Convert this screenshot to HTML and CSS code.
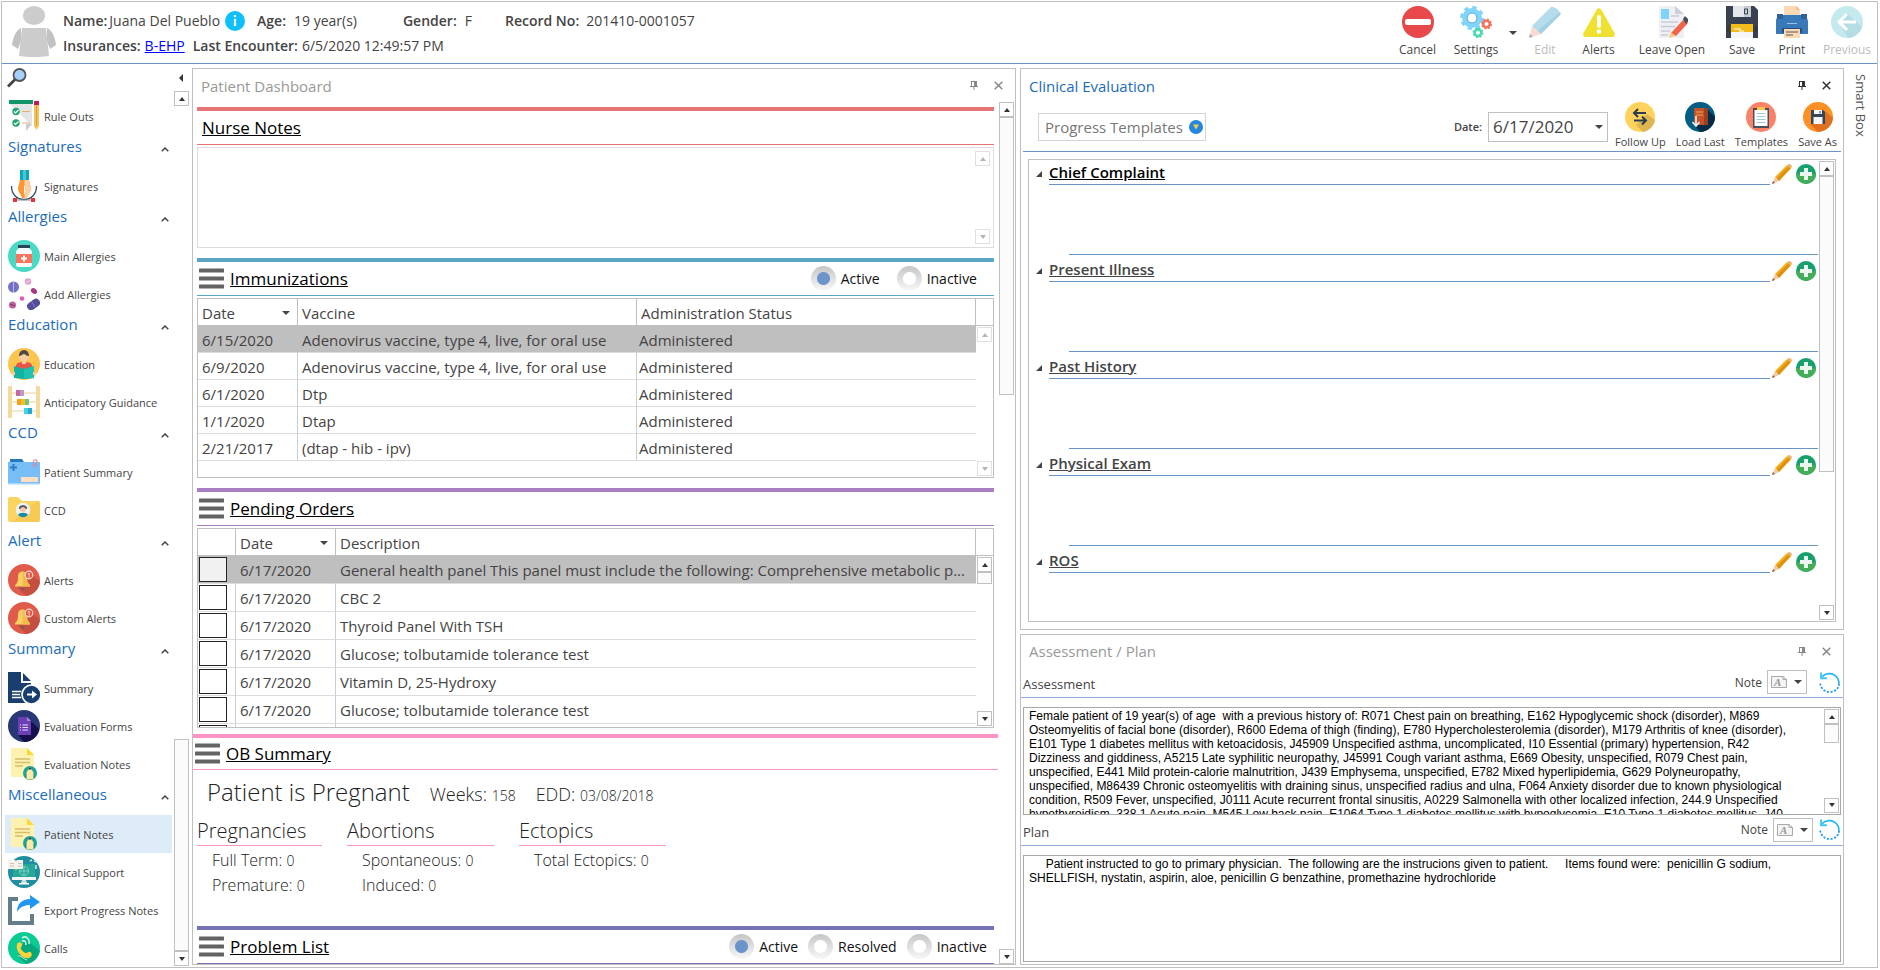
FILE: index.html
```html
<!DOCTYPE html>
<html lang="en">
<head>
    <meta charset="UTF-8">
    <meta name="viewport" content="width=device-width, initial-scale=1.0">
    <title>Patient Notes</title>
    <link rel="stylesheet" href="styles.css">
</head>
<body>
    <!-- Shared icons -->
    <svg class="sprite" aria-hidden="true">
        <symbol id="i-menu" viewBox="0 0 25 21">
            <path d="M1 2.500h23M1 10.500h23M1 18.500h23" stroke="#636363" stroke-width="4" stroke-linecap="round"/>
        </symbol>
        <symbol id="i-pin" viewBox="0 0 8 9">
            <path d="M1.500 0v5.500M1 .5h5M0 5.500h8M4 5.500V9" fill="none" stroke="currentColor"/>
            <path d="M4 0h3v6H4z" fill="currentColor"/>
        </symbol>
        <symbol id="i-close" viewBox="0 0 9 9">
            <path d="M.7.7l7.600 7.600M8.300.7L.7 8.300" stroke="currentColor" stroke-width="1.500"/>
        </symbol>
        <symbol id="i-chevron" viewBox="0 0 8 5">
            <path d="M.7 4.300L4 1l3.300 3.300" fill="none" stroke="#444" stroke-width="1.500"/>
        </symbol>
        <symbol id="i-pencil" viewBox="0 0 20 20">
            <path d="M3 13L15 1l4 3.500L7 17z" fill="#f3ae1b"/>
            <path d="M4.500 14.500L16.500 2.500l2 1.500L7 17z" fill="#dc9210"/>
            <path d="M15 1l2-1c1.500 0 2.500 1 3 2.500l-1 2z" fill="#e8b36a"/>
            <path d="M3 13l4 4-7 3z" fill="#f0cba0"/>
            <path d="M0 20l1-3 2 2z" fill="#8a5a4a"/>
        </symbol>
        <symbol id="i-plus" viewBox="0 0 20 20">
            <circle cx="10" cy="10" r="10" fill="#17a06e"/>
            <path d="M0 10a10 10 0 0 0 20 0z" fill="#43ae57"/>
            <path d="M10 4v12M4 10h12" stroke="#eef5ee" stroke-width="4"/>
        </symbol>
        <symbol id="i-refresh" viewBox="0 0 20 20">
            <path d="M3 4.500C6 1 12 .5 15.500 3.500 18 5.500 19 8 19 11" fill="none" stroke="#25b5f5" stroke-width="1.600"/>
            <path d="M19 11c0 5-4 8-9 8S1 15 1 9.500" fill="none" stroke="#1e9af0" stroke-width="1.700" stroke-dasharray="2 1.500"/>
            <path d="M2 .5V6h5.500" fill="none" stroke="#38c6f4" stroke-width="1.800"/>
        </symbol>
        <symbol id="i-page" viewBox="0 0 16 12">
            <path d="M.5.5H12l3.500 3v8H.5z" fill="#f4f4f4" stroke="#a9a9a9"/>
            <path d="M12 .5v3h3.500" fill="none" stroke="#a9a9a9"/>
        </symbol>
        <symbol id="i-bell" viewBox="0 0 32 32">
            <circle cx="16" cy="16" r="16" fill="#e05b49"/>
            <path d="M21 8l11 10c-1 7-6 13-14 14l-8-8z" fill="#c44f41"/>
            <path d="M7 21c3-2 3-5 3-9 0-3 2-4.500 4.500-4.500S19 9 19 12c0 4 0 7 3 9v1.500H7z" fill="#fbd063"/>
            <path d="M14.500 7.500C17 7.500 19 9 19 12c0 4 0 7 3 9v1.500h-7.500z" fill="#f3bb4e"/>
            <path d="M12 24h5l-2.500 3z" fill="#7b5a55"/>
            <circle cx="21" cy="11" r="3.800" fill="#e05b49" stroke="#f7dcd8" stroke-width="1.200"/>
        </symbol>
        <symbol id="i-note" viewBox="0 0 32 32">
            <path d="M3 0h16l7 7v22H3z" fill="#fff1b0"/>
            <path d="M19 0l7 7h-7z" fill="#fdd835"/>
            <path d="M7 11h15M7 14.500h15M7 18h8" stroke="#d8bd6a" stroke-width="1.300"/>
            <circle cx="22" cy="25" r="7" fill="#1aa594"/>
            <path d="M17.500 30.300c2.500 2.300 6.500 2.300 9 0L26 25h-8z" fill="#15877d"/>
            <path d="M22 18.500l3.500 6v7h-7v-7z" fill="#ffe9a8"/>
            <path d="M22 18.500l1.700 3h-3.400z" fill="#2b3b4a"/>
        </symbol>
    </svg>

    <div class="app">
        <header class="header">
            <svg class="avatar" viewBox="0 0 44 51">
                <ellipse cx="22" cy="9.500" rx="11" ry="9.500" fill="#ccc"/>
                <path d="M10 22h24l3 28c-8 1.500-22 1.500-30 0z" fill="#ccc"/>
                <path d="M9 22c-5 2-8 9-9 17l6 4 3-8zM35 22c5 2 8 9 9 17l-6 4-3-8z" fill="#c2c2c2"/>
            </svg>
            <div class="patient">
                <div class="patient-row">
                    <b class="name">Name:</b><span class="patient-name">Juana Del Pueblo</span>
                    <svg class="info" viewBox="0 0 20 20"><circle cx="10" cy="10" r="10" fill="#0dc0fb"/><path d="M10 8v7M10 4v2.300" stroke="#fff" stroke-width="2.200"/></svg>
                    <b class="age">Age:</b><span>19 year(s)</span>
                    <b class="gender">Gender:</b><span>F</span>
                    <b class="record">Record No:</b><span>201410-0001057</span>
                </div>
                <div class="patient-row">
                    <b>Insurances:</b><a href="#" class="insurance">B-EHP</a>
                    <b>Last Encounter:</b><span>6/5/2020 12:49:57 PM</span>
                </div>
            </div>
            <nav class="toolbar">
                <button type="button" class="tool">
                    <svg viewBox="0 0 32 32"><circle cx="16" cy="16" r="16" fill="#e84849"/><rect x="3" y="13" width="26" height="6" rx="2" fill="#fff"/></svg>
                    Cancel
                </button>
                <button type="button" class="tool tool-wide">
                    <svg viewBox="0 0 32 32">
                        <circle cx="12" cy="12" r="10" fill="none" stroke="#7fd3f9" stroke-width="4" stroke-dasharray="4 3.850"/>
                        <circle cx="12" cy="12" r="7.500" fill="none" stroke="#82d5fb" stroke-width="5"/>
                        <circle cx="12" cy="12" r="5" fill="none" stroke="#5aa8d8" stroke-width="1"/>
                        <circle cx="26.500" cy="18" r="3.300" fill="none" stroke="#f4735c" stroke-width="2.600"/>
                        <circle cx="26.500" cy="18" r="4.700" fill="none" stroke="#f4735c" stroke-width="1.600" stroke-dasharray="1.900 1.790"/>
                        <circle cx="18" cy="26.700" r="3.300" fill="none" stroke="#4ad9b4" stroke-width="2.600"/>
                        <circle cx="18" cy="26.700" r="4.700" fill="none" stroke="#4ad9b4" stroke-width="1.600" stroke-dasharray="1.900 1.790"/>
                    </svg>
                    Settings
                </button>
                <button type="button" class="tool-more" aria-label="More settings"><i class="caret"></i></button>
                <button type="button" class="tool tool-narrow" disabled>
                    <svg viewBox="0 0 32 32">
                        <path d="M3 20L22 1c2-2 11 5 9 8L12 28z" fill="#b5dcec"/>
                        <path d="M8 25L31 6c1 1 1 2 0 3L12 28z" fill="#a5d0e2"/>
                        <path d="M3 20l9 8-12 4z" fill="#f8dcd2"/>
                        <path d="M1 28l3 2.500L0 32z" fill="#9fb2bb"/>
                    </svg>
                    Edit
                </button>
                <button type="button" class="tool">
                    <svg viewBox="0 0 32 32">
                        <path d="M13.500 4c1.200-2.300 3.800-2.300 5 0l13 23c1 2-.3 4-2.500 4H3c-2.200 0-3.500-2-2.500-4z" fill="#f0e130"/>
                        <path d="M16 11v9" stroke="#fff" stroke-width="4" stroke-linecap="round"/><circle cx="16" cy="25.500" r="2.300" fill="#fff"/>
                    </svg>
                    Alerts
                </button>
                <button type="button" class="tool tool-long">
                    <svg viewBox="0 0 32 32">
                        <path d="M3 0h16l9 8v24H3z" fill="#eef0f4"/><path d="M19 0l9 8h-9z" fill="#c9cfdb"/>
                        <path d="M5 3h8v10H5z" fill="#7cd3fb"/>
                        <path d="M15 10h8M5 16h17M5 20.500h14M5 25h9M5 29h7" stroke="#c6ccd7" stroke-width="1.300"/>
                        <path d="M15 27L28 13l4 4-12 13z" fill="#f0654a"/><path d="M27 13l2-3 4 4-3 4z" fill="#46505f"/>
                        <path d="M15 26l4 4-6 2z" fill="#f5c77b"/>
                    </svg>
                    Leave Open
                </button>
                <button type="button" class="tool tool-narrow">
                    <svg viewBox="0 0 32 32">
                        <path d="M0 0h28l4 4v28H0z" fill="#394052"/><path d="M7 0h18v11H7z" fill="#c9cdd3"/><path d="M7 0h11v11H7z" fill="#e4e6ea"/>
                        <path d="M18.500 3h3v5h-3z" fill="#c9cdd3" stroke="#394052"/>
                        <path d="M5 18h22v8H5z" fill="#f2bd1c"/><path d="M5 26h22v6H5z" fill="#f5f5f5"/><path d="M8 23h7M13 25h5" stroke="#fff"/>
                        <path d="M2 20v6M30 20v6" stroke="#262c3a"/>
                    </svg>
                    Save
                </button>
                <button type="button" class="tool tool-narrow">
                    <svg viewBox="0 0 32 32">
                        <path d="M8 0h13l3 4v10H8z" fill="#fbd9b5"/><path d="M20 0l4 4h-4z" fill="#eebc8d"/>
                        <path d="M2 9h28l2 6v13H0V14z" fill="#3a79b7"/><path d="M1 8h6v5H1zM25 8h6v5h-6z" fill="#2f6299"/>
                        <path d="M11 17.500h10" stroke="#8ec7f0"/>
                        <path d="M6 22h20v5H6z" fill="#25507f"/><path d="M8 23h16v9H8z" fill="#fbd9b5"/><path d="M10 26h12M10 29h7" stroke="#5d5a58"/>
                    </svg>
                    Print
                </button>
                <button type="button" class="tool tool-wide" disabled>
                    <svg viewBox="0 0 32 32">
                        <circle cx="16" cy="16" r="16" fill="#c5eaee"/><path d="M16 7l15 14c-2 6-7 11-14 11L8 17z" fill="#b5dde3"/>
                        <path d="M25 16H9M16 8l-8 8 8 8" fill="none" stroke="#fff" stroke-width="3"/>
                    </svg>
                    Previous
                </button>
            </nav>
        </header>

        <div class="main">
            <aside class="sidebar">
                <div class="sidebar-top">
                    <svg viewBox="0 0 20 20"><circle cx="12.500" cy="7" r="6" fill="#a4d0fb" stroke="#555" stroke-width="1.800"/><path d="M8 11.500L1 18.500" stroke="#444" stroke-width="2.800"/></svg>
                    <i class="collapse"></i>
                </div>
                <div class="sidebar-body">
                    <div class="sidebar-list">
                        <a href="#" class="item">
                            <svg viewBox="0 0 32 32">
                                <path d="M2 1h22v30l-7-6H2z" fill="#fff"/><path d="M2 4h22v22z" fill="#e2e4e6"/><path d="M18 24h6l-6 7z" fill="#c9ccd0"/>
                                <path d="M1 0h24v4H1z" fill="#12946a"/>
                                <circle cx="8" cy="11.500" r="3.700" fill="#22a56e"/><circle cx="8" cy="23" r="3.700" fill="#22a56e"/>
                                <path d="M6 11.500l1.500 1.500 3-3M6 23l1.500 1.500 3-3" fill="none" stroke="#fff" stroke-width="1.200"/>
                                <path d="M14 11.500h8M14 23h8" stroke="#e3b268"/>
                                <path d="M26 4h5v22l-2.500 4-2.500-4z" fill="#f3c35a"/><path d="M28.500 4v22" stroke="#d9a13c"/><path d="M26 1h5v4h-5z" fill="#c2185b"/>
                            </svg>
                            Rule Outs
                        </a>
                        <h3 class="group">Signatures <svg><use href="#i-chevron"/></svg></h3>
                        <a href="#" class="item">
                            <svg viewBox="0 0 32 32">
                                <path d="M12 0h9v10h-9z" fill="#0fa7b8"/><path d="M15 0h3v10h-3z" fill="#47c8da"/>
                                <path d="M12 10h9l2 8c0 4-3 6-4 10h-5c-1-4-4-6-4-10z" fill="#ff9633"/><path d="M16.500 10H21l2 8c0 4-3 6-4 10h-2.500z" fill="#fcd0a4"/>
                                <path d="M16.500 16v8" stroke="#fff"/>
                                <path d="M3.500 16c0 8 5 13.500 12.500 13.500S28.500 24 28.500 16" fill="none" stroke="#35525e" stroke-width="1.300"/><path d="M7 30h18" stroke="#8796a0"/>
                                <path d="M5 28h4v4H5zM23 28h4v4h-4z" fill="#e8323c"/>
                            </svg>
                            Signatures
                        </a>
                        <h3 class="group">Allergies <svg><use href="#i-chevron"/></svg></h3>
                        <a href="#" class="item">
                            <svg viewBox="0 0 32 32">
                                <circle cx="16" cy="16" r="16" fill="#4ad9c4"/><path d="M11 8h10l3 3v14c0 1-1 2-2 2H10c-1 0-2-1-2-2V11z" fill="#f7fafa"/>
                                <path d="M10 5h12v3H10z" fill="#2c4257"/><path d="M8 14h16v9H8z" fill="#fb7358"/><path d="M16 15.500v6M13 18.500h6" stroke="#fff" stroke-width="2"/>
                            </svg>
                            Main Allergies
                        </a>
                        <a href="#" class="item">
                            <svg viewBox="0 0 32 32">
                                <circle cx="5.500" cy="9" r="5.500" fill="#7571c9"/><path d="M5.500 4v10" stroke="#bdb9ee"/>
                                <circle cx="20" cy="3.500" r="3.300" fill="#dfa0cb"/><path d="M18 5l4-3" stroke="#f6dcee"/>
                                <ellipse cx="26" cy="13" rx="3.300" ry="2.500" transform="rotate(35 26 13)" fill="#a83a84"/>
                                <circle cx="14" cy="20.500" r="2.300" fill="#ea55bc"/><circle cx="4.500" cy="27" r="3.500" fill="#c0609f"/><path d="M2 26l5 2" stroke="#7e2c67"/>
                                <rect x="18.500" y="22.500" width="14" height="8" rx="4" transform="rotate(-35 25.500 26.500)" fill="#544e9d"/><path d="M23 23l4 6" stroke="#8580cc"/>
                            </svg>
                            Add Allergies
                        </a>
                        <h3 class="group">Education <svg><use href="#i-chevron"/></svg></h3>
                        <a href="#" class="item">
                            <svg viewBox="0 0 32 32">
                                <circle cx="16" cy="16" r="16" fill="#fdc54e"/><path d="M8 17c2-3 4-3 8-3s6 0 8 3v5H8z" fill="#e8564b"/>
                                <circle cx="16" cy="8.500" r="5" fill="#f7cda4"/><path d="M11 8c0-8 10-8 10 0-3 0-4-2-5-2s-3 2-5 2z" fill="#4f4a48"/><path d="M14 13h4v3h-4z" fill="#f7cda4"/>
                                <path d="M6 18l10 3 10-3v12l-10 1-10-1z" fill="#12b3a3"/><path d="M16 21l10-3v12l-10 1z" fill="#22c2b0"/><path d="M4 24h3v3H4zM25 24h3v3h-3z" fill="#f7cda4"/>
                            </svg>
                            Education
                        </a>
                        <a href="#" class="item">
                            <svg viewBox="0 0 32 32">
                                <path d="M4 7h24M4 16h24M4 25h24" stroke="#e6cf98"/>
                                <path d="M2 1.500v29M30 1.500v29" stroke="#f3d99b" stroke-width="4" stroke-linecap="round"/>
                                <path d="M8 4h4v6H8z" fill="#c9659f"/><path d="M12 4h4v6h-4z" fill="#b79ccb"/>
                                <path d="M9 13h4v6H9z" fill="#f5a11d"/><path d="M13 13h4v6h-4z" fill="#f6c218"/><path d="M17 13h4v6h-4z" fill="#73c08b"/>
                                <path d="M16 22h4v6h-4z" fill="#44d1ee"/><path d="M20 22h4v6h-4z" fill="#2aa9cf"/>
                            </svg>
                            Anticipatory Guidance
                        </a>
                        <h3 class="group">CCD <svg><use href="#i-chevron"/></svg></h3>
                        <a href="#" class="item">
                            <svg viewBox="0 0 32 32">
                                <path d="M2 3h12l2 3H2z" fill="#2678bd"/><path d="M0 6h32v22H0z" fill="#77bdf6"/><path d="M0 27h32v1.500H0z" fill="#a7d6fb"/>
                                <path d="M5.500 8v7M2 11.500h7" stroke="#2b7fc4" stroke-width="2"/><path d="M13 21h17v5H13z" fill="#fcdfc2"/>
                                <path d="M25 8l1-4h3l-1 6-2 1z" fill="none" stroke="#e57f8b"/>
                            </svg>
                            Patient Summary
                        </a>
                        <a href="#" class="item">
                            <svg viewBox="0 0 32 32">
                                <path d="M0 5c0-1 1-2 2-2h8l4 4h16c1 0 2 1 2 2v17c0 1-1 2-2 2H2c-1 0-2-1-2-2z" fill="#fbd35f"/><path d="M30 7c1 0 2 1 2 2v17c0 1-1 2-2 2H4z" fill="#f4c04c" opacity=".5"/>
                                <circle cx="15" cy="16" r="7.300" fill="#edf1f3"/><circle cx="15" cy="15" r="3" fill="#f5c9a2"/>
                                <path d="M11 15c-1-5 9-5 8 0-2 0-2-2-4-2s-2 2-4 2z" fill="#49545d"/><path d="M10 21c1-3 9-3 10 0-3 3-7 3-10 0z" fill="#1b8ba0"/>
                            </svg>
                            CCD
                        </a>
                        <h3 class="group">Alert <svg><use href="#i-chevron"/></svg></h3>
                        <a href="#" class="item"><svg viewBox="0 0 32 32"><use href="#i-bell"/><text x="19" y="14" font-size="7" fill="#fff">1</text></svg>Alerts</a>
                        <a href="#" class="item"><svg viewBox="0 0 32 32"><use href="#i-bell"/><text x="19" y="14" font-size="7" fill="#fff">1</text></svg>Custom Alerts</a>
                        <h3 class="group">Summary <svg><use href="#i-chevron"/></svg></h3>
                        <a href="#" class="item">
                            <svg viewBox="0 0 32 32">
                                <path d="M0 0h13v11h10v20H0z" fill="#183f6d"/><path d="M15 1l8 8h-8z" fill="#183f6d"/>
                                <path d="M4 19.500h9M4 22.500h8M4 25.500h9" stroke="#fff" stroke-width="1.300"/>
                                <circle cx="23.500" cy="22.500" r="9.500" fill="#183f6d" stroke="#fff" stroke-width="1.700"/><path d="M19 22.500h6" stroke="#fff" stroke-width="2"/><path d="M24 18.500l5 4-5 4z" fill="#fff"/>
                            </svg>
                            Summary
                        </a>
                        <a href="#" class="item">
                            <svg viewBox="0 0 32 32">
                                <circle cx="16" cy="16" r="16" fill="#283876"/><path d="M22 10l9 9c-1 7-7 13-15 13l-6-7z" fill="#150f4c"/>
                                <path d="M10 7h9l4 4v14H10z" fill="#6b3fb5"/><path d="M19 7l4 4h-4z" fill="#a887dc"/>
                                <path d="M12 15h1M14.500 15H20M12 17.500h1M14.500 17.500H20M12 20h1M14.500 20H20" stroke="#e7dcf8" stroke-width="1.200"/>
                            </svg>
                            Evaluation Forms
                        </a>
                        <a href="#" class="item"><svg><use href="#i-note"/></svg>Evaluation Notes</a>
                        <h3 class="group">Miscellaneous <svg><use href="#i-chevron"/></svg></h3>
                        <a href="#" class="item selected"><svg><use href="#i-note"/></svg>Patient Notes</a>
                        <a href="#" class="item">
                            <svg viewBox="0 0 32 32">
                                <circle cx="16" cy="16" r="16" fill="#1f8fa0"/><path d="M5 8h22v14H5z" fill="#27a796"/><path d="M4 21h24v3H4z" fill="#f2f5f7"/>
                                <path d="M14 24h4l1 3h-6z" fill="#d4dbe0"/><path d="M11 27h10v1.500H11z" fill="#fff"/>
                                <circle cx="16" cy="15" r="4.500" fill="none" stroke="#7ed0c6"/><path d="M11.500 15h9M16 10.500v9" stroke="#7ed0c6"/>
                                <path d="M0 4h7l1 1 1-1h6v9H9l-1 1-1-1H0z" fill="#f7f3ea"/><path d="M2 7.500h4M2 10h4M10 7.500h4M10 10h4" stroke="#c9c4b8"/>
                                <path d="M22 5l2-1M26 5l3 1M28 9v4" stroke="#d9eef2" stroke-width="1.500"/>
                            </svg>
                            Clinical Support
                        </a>
                        <a href="#" class="item">
                            <svg viewBox="0 0 32 32">
                                <path d="M10 5H2v24h22v-9" fill="none" stroke="#647d8a" stroke-width="4"/>
                                <path d="M22 1l10 7-10 7v-4c-6 0-10 2-13 7 0-8 5-13 13-13z" fill="#2196f3"/>
                            </svg>
                            Export Progress Notes
                        </a>
                        <a href="#" class="item">
                            <svg viewBox="0 0 32 32">
                                <circle cx="16" cy="16" r="16" fill="#0acb93"/><path d="M17 7l15 12c-2 8-7 12-14 13l-8-8z" fill="#07a87c"/>
                                <path d="M9 12c2-3 5-2 5 1 0 2-2 2-1 4s4 4 5 4c2 0 2-2 4-1 3 1 2 5-1 6-6 2-14-7-12-14z" fill="#fdd23a"/>
                                <path d="M14 6c4-3 8 1 7 6M14 9c3-1 4 1 4 4" fill="none" stroke="#d6f5e8" stroke-width="1.500"/>
                                <path d="M10 24c3-1 5 3 9 4" fill="none" stroke="#d6f5e8"/>
                            </svg>
                            Calls
                        </a>
                    </div>
                    <div class="scroll">
                        <button type="button" class="scroll-btn" aria-label="Scroll up"><i class="up"></i></button>
                        <div class="track"></div>
                        <div class="thumb thumb-sidebar"></div>
                        <button type="button" class="scroll-btn" aria-label="Scroll down"><i class="down"></i></button>
                    </div>
                </div>
            </aside>

            <section class="panel dashboard">
                <div class="panel-title">
                    <h2>Patient Dashboard</h2>
                    <button type="button" aria-label="Pin"><svg class="pin"><use href="#i-pin"/></svg></button>
                    <button type="button" aria-label="Close"><svg class="close"><use href="#i-close"/></svg></button>
                </div>
                <div class="dashboard-body">
                    <div class="dashboard-content">
                        <div class="section nurse">
                            <div class="section-head"><a href="#">Nurse Notes</a></div>
                            <div class="nurse-box">
                                <div class="scroll off">
                                    <button type="button" class="scroll-btn" aria-label="Scroll up"><i class="up"></i></button>
                                    <div class="track"></div>
                                    <button type="button" class="scroll-btn" aria-label="Scroll down"><i class="down"></i></button>
                                </div>
                            </div>
                        </div>

                        <div class="section immunizations">
                            <div class="section-head">
                                <svg class="menu"><use href="#i-menu"/></svg>
                                <a href="#">Immunizations</a>
                                <div class="radios">
                                    <label><input type="radio" name="imm" checked>Active</label>
                                    <label><input type="radio" name="imm">Inactive</label>
                                </div>
                            </div>
                            <div class="grid-box imm-box">
                                <table>
                                    <colgroup><col class="col-date"><col class="col-half"><col class="col-half"></colgroup>
                                    <thead>
                                        <tr><th>Date<i class="caret"></i></th><th>Vaccine</th><th>Administration Status</th></tr>
                                    </thead>
                                    <tbody>
                                        <tr class="current"><td>6/15/2020</td><td>Adenovirus vaccine, type 4, live, for oral use</td><td>Administered</td></tr>
                                        <tr><td>6/9/2020</td><td>Adenovirus vaccine, type 4, live, for oral use</td><td>Administered</td></tr>
                                        <tr><td>6/1/2020</td><td>Dtp</td><td>Administered</td></tr>
                                        <tr><td>1/1/2020</td><td>Dtap</td><td>Administered</td></tr>
                                        <tr><td>2/21/2017</td><td>(dtap - hib - ipv)</td><td>Administered</td></tr>
                                    </tbody>
                                </table>
                                <div class="grid-side">
                                    <div class="grid-corner"></div>
                                    <div class="scroll off">
                                        <button type="button" class="scroll-btn" aria-label="Scroll up"><i class="up"></i></button>
                                        <div class="track"></div>
                                        <button type="button" class="scroll-btn" aria-label="Scroll down"><i class="down"></i></button>
                                    </div>
                                </div>
                            </div>
                        </div>

                        <div class="section orders">
                            <div class="section-head">
                                <svg class="menu"><use href="#i-menu"/></svg>
                                <a href="#">Pending Orders</a>
                            </div>
                            <div class="grid-box orders-box">
                                <table>
                                    <colgroup><col class="col-check"><col class="col-date"><col></colgroup>
                                    <thead>
                                        <tr><th></th><th>Date<i class="caret"></i></th><th>Description</th></tr>
                                    </thead>
                                    <tbody>
                                        <tr class="current"><td><input type="checkbox" aria-label="Select order"></td><td>6/17/2020</td><td>General health panel This panel must include the following: Comprehensive metabolic p...</td></tr>
                                        <tr><td><input type="checkbox" aria-label="Select order"></td><td>6/17/2020</td><td>CBC 2</td></tr>
                                        <tr><td><input type="checkbox" aria-label="Select order"></td><td>6/17/2020</td><td>Thyroid Panel With TSH</td></tr>
                                        <tr><td><input type="checkbox" aria-label="Select order"></td><td>6/17/2020</td><td>Glucose; tolbutamide tolerance test</td></tr>
                                        <tr><td><input type="checkbox" aria-label="Select order"></td><td>6/17/2020</td><td>Vitamin D, 25-Hydroxy</td></tr>
                                        <tr><td><input type="checkbox" aria-label="Select order"></td><td>6/17/2020</td><td>Glucose; tolbutamide tolerance test</td></tr>
                                        <tr><td><input type="checkbox" aria-label="Select order"></td><td></td><td></td></tr>
                                    </tbody>
                                </table>
                                <div class="grid-side">
                                    <div class="grid-corner"></div>
                                    <div class="scroll">
                                        <button type="button" class="scroll-btn" aria-label="Scroll up"><i class="up"></i></button>
                                        <div class="thumb thumb-small"></div>
                                        <div class="track"></div>
                                        <button type="button" class="scroll-btn" aria-label="Scroll down"><i class="down"></i></button>
                                    </div>
                                </div>
                            </div>
                        </div>

                        <div class="section ob">
                            <div class="section-head">
                                <svg class="menu"><use href="#i-menu"/></svg>
                                <a href="#">OB Summary</a>
                            </div>
                            <div class="ob-status">
                                <span class="ob-main">Patient is Pregnant</span>
                                <span>Weeks: <small>158</small></span>
                                <span>EDD: <small>03/08/2018</small></span>
                            </div>
                            <div class="ob-columns">
                                <div class="ob-col">
                                    <h4>Pregnancies</h4>
                                    <p>Full Term: <small>0</small></p>
                                    <p>Premature: <small>0</small></p>
                                </div>
                                <div class="ob-col">
                                    <h4>Abortions</h4>
                                    <p>Spontaneous: <small>0</small></p>
                                    <p>Induced: <small>0</small></p>
                                </div>
                                <div class="ob-col">
                                    <h4>Ectopics</h4>
                                    <p>Total Ectopics: <small>0</small></p>
                                </div>
                            </div>
                        </div>

                        <div class="section problems">
                            <div class="section-head">
                                <svg class="menu"><use href="#i-menu"/></svg>
                                <a href="#">Problem List</a>
                                <div class="radios">
                                    <label><input type="radio" name="prob" checked>Active</label>
                                    <label><input type="radio" name="prob">Resolved</label>
                                    <label><input type="radio" name="prob">Inactive</label>
                                </div>
                            </div>
                        </div>
                    </div>
                    <div class="scroll">
                        <button type="button" class="scroll-btn" aria-label="Scroll up"><i class="up"></i></button>
                        <div class="thumb thumb-dashboard"></div>
                        <div class="track"></div>
                        <button type="button" class="scroll-btn" aria-label="Scroll down"><i class="down"></i></button>
                    </div>
                </div>
            </section>

            <div class="right">
                <section class="panel active clinical">
                    <div class="panel-title">
                        <h2>Clinical Evaluation</h2>
                        <button type="button" aria-label="Pin"><svg class="pin"><use href="#i-pin"/></svg></button>
                        <button type="button" aria-label="Close"><svg class="close"><use href="#i-close"/></svg></button>
                    </div>
                    <div class="clinical-bar">
                        <button type="button" class="templates">
                            Progress Templates
                            <svg viewBox="0 0 14 14"><circle cx="7" cy="7" r="7" fill="#2488dc"/><path d="M4 4.500h6L7 9.500z" fill="#fbc94b"/></svg>
                        </button>
                        <label class="date-label" for="date">Date:</label>
                        <div class="date-box">
                            <select id="date"><option>6/17/2020</option></select>
                            <i class="caret"></i>
                        </div>
                        <div class="round-tools">
                            <button type="button">
                                <svg viewBox="0 0 30 30">
                                    <circle cx="15" cy="15" r="15" fill="#ffd25e"/><path d="M22 12l8 6c-1 6-6 11-12 12l-7-7z" fill="#e0b54e"/>
                                    <path d="M21 11H9M13 7l-4 4 4 4M9 18.500h12M17 14.500l4 4-4 4" fill="none" stroke="#2b3b4e" stroke-width="2"/>
                                </svg>
                                Follow Up
                            </button>
                            <button type="button">
                                <svg viewBox="0 0 30 30">
                                    <circle cx="15" cy="15" r="15" fill="#045e84"/><path d="M22 7l8 8c0 8-7 15-15 15l-5-6z" fill="#032b45"/>
                                    <path d="M9 6h14v17H9z" fill="#c4532d"/><path d="M19 6h4v17h-4z" fill="#98401f"/><path d="M11 10h7M11 13h7" stroke="#f5a34c"/>
                                    <path d="M11 14v9M7.500 20l3.500 4 3.500-4" fill="none" stroke="#e6f4fb" stroke-width="1.600"/>
                                </svg>
                                Load Last
                            </button>
                            <button type="button">
                                <svg viewBox="0 0 30 30">
                                    <circle cx="15" cy="15" r="15" fill="#fb8167"/><path d="M7 6h16v20H7z" fill="#474e5c"/><path d="M8.500 8h13v16h-13z" fill="#fff"/>
                                    <path d="M11 5h8v3h-8z" fill="#fcc54c"/><path d="M10.500 11.500h9M10.500 14.500h9M10.500 17.500h9M10.500 20.500h9" stroke="#9ccbe6"/>
                                </svg>
                                Templates
                            </button>
                            <button type="button">
                                <svg viewBox="0 0 30 30">
                                    <circle cx="15" cy="15" r="15" fill="#fd9126"/><path d="M22 9l8 7c-1 8-7 13-15 14l-7-7z" fill="#e06f1f"/>
                                    <path d="M8 8h12l2 2v12H8z" fill="#34455a"/><path d="M11 8h8v4h-8zM10.500 15h9v7h-9z" fill="#f3f5f7"/><path d="M17 9v2.500" stroke="#34455a"/>
                                </svg>
                                Save As
                            </button>
                        </div>
                    </div>
                    <div class="eval-box">
                        <div class="eval-list">
                            <div class="eval current">
                                <div class="eval-head"><i class="expander"></i><div class="eval-line"><a href="#">Chief Complaint</a></div><button type="button" aria-label="Edit"><svg><use href="#i-pencil"/></svg></button><button type="button" aria-label="Add"><svg><use href="#i-plus"/></svg></button></div>
                                <div class="eval-body"></div>
                            </div>
                            <div class="eval">
                                <div class="eval-head"><i class="expander"></i><div class="eval-line"><a href="#">Present Illness</a></div><button type="button" aria-label="Edit"><svg><use href="#i-pencil"/></svg></button><button type="button" aria-label="Add"><svg><use href="#i-plus"/></svg></button></div>
                                <div class="eval-body"></div>
                            </div>
                            <div class="eval">
                                <div class="eval-head"><i class="expander"></i><div class="eval-line"><a href="#">Past History</a></div><button type="button" aria-label="Edit"><svg><use href="#i-pencil"/></svg></button><button type="button" aria-label="Add"><svg><use href="#i-plus"/></svg></button></div>
                                <div class="eval-body"></div>
                            </div>
                            <div class="eval">
                                <div class="eval-head"><i class="expander"></i><div class="eval-line"><a href="#">Physical Exam</a></div><button type="button" aria-label="Edit"><svg><use href="#i-pencil"/></svg></button><button type="button" aria-label="Add"><svg><use href="#i-plus"/></svg></button></div>
                                <div class="eval-body"></div>
                            </div>
                            <div class="eval">
                                <div class="eval-head"><i class="expander"></i><div class="eval-line"><a href="#">ROS</a></div><button type="button" aria-label="Edit"><svg><use href="#i-pencil"/></svg></button><button type="button" aria-label="Add"><svg><use href="#i-plus"/></svg></button></div>
                                <div class="eval-body"></div>
                            </div>
                        </div>
                        <div class="scroll">
                            <button type="button" class="scroll-btn" aria-label="Scroll up"><i class="up"></i></button>
                            <div class="thumb thumb-eval"></div>
                            <div class="track"></div>
                            <button type="button" class="scroll-btn" aria-label="Scroll down"><i class="down"></i></button>
                        </div>
                    </div>
                </section>

                <section class="panel plan">
                    <div class="panel-title">
                        <h2>Assessment / Plan</h2>
                        <button type="button" aria-label="Pin"><svg class="pin"><use href="#i-pin"/></svg></button>
                        <button type="button" aria-label="Close"><svg class="close"><use href="#i-close"/></svg></button>
                    </div>
                    <div class="plan-head">
                        <label for="assessment">Assessment</label>
                        <span class="note">Note</span>
                        <button type="button" class="note-btn" aria-label="Note template"><svg viewBox="0 0 16 12"><use href="#i-page"/><text class="note-letter" x="3" y="10">A</text></svg><i class="caret"></i></button>
                        <button type="button" class="refresh" aria-label="Refresh"><svg><use href="#i-refresh"/></svg></button>
                    </div>
                    <div class="plan-box">
                        <textarea id="assessment">Female patient of 19 year(s) of age  with a previous history of: R071 Chest pain on breathing, E162 Hypoglycemic shock (disorder), M869
Osteomyelitis of facial bone (disorder), R600 Edema of thigh (finding), E780 Hypercholesterolemia (disorder), M179 Arthritis of knee (disorder),
E101 Type 1 diabetes mellitus with ketoacidosis, J45909 Unspecified asthma, uncomplicated, I10 Essential (primary) hypertension, R42
Dizziness and giddiness, A5215 Late syphilitic neuropathy, J45991 Cough variant asthma, E669 Obesity, unspecified, R079 Chest pain,
unspecified, E441 Mild protein-calorie malnutrition, J439 Emphysema, unspecified, E782 Mixed hyperlipidemia, G629 Polyneuropathy,
unspecified, M86439 Chronic osteomyelitis with draining sinus, unspecified radius and ulna, F064 Anxiety disorder due to known physiological
condition, R509 Fever, unspecified, J0111 Acute recurrent frontal sinusitis, A0229 Salmonella with other localized infection, 244.9 Unspecified
hypothyroidism, 338.1 Acute pain, M545 Low back pain, E1064 Type 1 diabetes mellitus with hypoglycemia, E10 Type 1 diabetes mellitus, J40</textarea>
                        <div class="scroll">
                            <button type="button" class="scroll-btn" aria-label="Scroll up"><i class="up"></i></button>
                            <div class="thumb thumb-note"></div>
                            <div class="track"></div>
                            <button type="button" class="scroll-btn" aria-label="Scroll down"><i class="down"></i></button>
                        </div>
                    </div>
                    <div class="plan-head">
                        <label for="plan">Plan</label>
                        <span class="note">Note</span>
                        <button type="button" class="note-btn close-by" aria-label="Note template"><svg viewBox="0 0 16 12"><use href="#i-page"/><text class="note-letter" x="3" y="10">A</text></svg><i class="caret"></i></button>
                        <button type="button" class="refresh" aria-label="Refresh"><svg><use href="#i-refresh"/></svg></button>
                    </div>
                    <div class="plan-box">
                        <textarea id="plan">     Patient instructed to go to primary physician.  The following are the instrucions given to patient.     Items found were:  penicillin G sodium,
SHELLFISH, nystatin, aspirin, aloe, penicillin G benzathine, promethazine hydrochloride</textarea>
                    </div>
                </section>
            </div>

            <div class="smart-box"><a href="#">Smart Box</a></div>
        </div>
    </div>
</body>
</html>
```

FILE: styles.css
```css
* {
    box-sizing: border-box;
}

body {
    margin: 0;
    padding: 1px 2px 2px 1px;
    height: 100vh;
    font-family: "Open Sans", "Noto Sans", sans-serif;
    font-size: 15px;
    color: #444;
    background-color: #fff;
}

button {
    font-family: inherit;
    color: inherit;
    background: none;
    border: none;
    padding: 0;
    cursor: pointer;
}

h2, h3, h4, p {
    margin: 0;
    font-weight: 400;
}

svg {
    display: block;
    flex: none;
}

.sprite {
    position: absolute;
    width: 0;
    height: 0;
}

.app {
    display: flex;
    flex-direction: column;
    height: 100%;
    border: 1px solid #c0c0c0;
}

/* Header */
.header {
    display: flex;
    height: 62px;
    border-bottom: 1px solid #6a93c8;
    flex: none;
}

.avatar {
    width: 44px;
    height: 51px;
    margin: 4px 7px 0 10px;
}

.patient {
    flex: 1;
    padding-top: 6px;
    white-space: nowrap;
}

.patient-row {
    display: flex;
    align-items: center;
    height: 25px;
    font-size: 14px;
}

.patient-row b {
    font-weight: 600;
    margin-right: 4px;
}

.patient-row .name {
    margin-right: 2px;
}

.patient-row .patient-name {
    margin-right: 5px;
}

.patient-row .age {
    margin: 0 8px 0 12px;
}

.patient-row .gender {
    margin: 0 8px 0 46px;
}

.patient-row .record {
    margin: 0 7px 0 33px;
}

.patient-row .insurance {
    color: #00f;
    margin-right: 8px;
}

.info {
    width: 20px;
    height: 20px;
}

.toolbar {
    display: flex;
    align-items: flex-start;
    padding-top: 4px;
}

.tool {
    display: flex;
    flex-direction: column;
    align-items: center;
    width: 57px;
    font-size: 12px;
    line-height: 16px;
    white-space: nowrap;
}

.tool svg {
    width: 32px;
    height: 32px;
    margin-bottom: 4px;
}

.tool-wide {
    width: 60px;
}

.tool-long {
    width: 90px;
}

.tool-narrow {
    width: 50px;
}

.tool:disabled {
    color: #bbb;
}

.tool-more {
    width: 14px;
    height: 54px;
    display: flex;
    align-items: center;
    justify-content: center;
}

.caret {
    border: 4px solid transparent;
    border-top-color: #444;
    border-bottom: none;
    flex: none;
}

/* Scroll bars */
.scroll {
    display: flex;
    flex-direction: column;
    width: 15px;
    flex: none;
}

.scroll-btn {
    display: flex;
    align-items: center;
    justify-content: center;
    width: 15px;
    height: 15px;
    background-color: #fff;
    border: 1px solid #c0c0c0;
    flex: none;
}

.scroll .track {
    flex: 1;
}

.scroll .thumb {
    background-color: #fbfbfb;
    border: 1px solid #c0c0c0;
}

.up, .down {
    border: 3px solid transparent;
}

.up {
    border-bottom: 4px solid #333;
    border-top: none;
}

.down {
    border-top: 4px solid #333;
    border-bottom: none;
}

.off .scroll-btn {
    border-color: #e0e0e0;
}

.off .up {
    border-bottom-color: #b4b4b4;
}

.off .down {
    border-top-color: #b4b4b4;
}

.thumb-sidebar {
    height: 212px;
}

.thumb-dashboard {
    height: 278px;
}

.thumb-small {
    height: 12px;
}

.thumb-eval {
    height: 296px;
}

.thumb-note {
    height: 19px;
}

/* Main area */
.main {
    display: flex;
    flex: 1;
    min-height: 0;
}

/* Sidebar */
.sidebar {
    display: flex;
    flex-direction: column;
    width: 190px;
    padding: 0 3px 1px 3px;
    flex: none;
}

.sidebar-top {
    display: flex;
    justify-content: space-between;
    align-items: flex-start;
    height: 27px;
    padding: 4px 6px 0 2px;
    flex: none;
}

.sidebar-top svg {
    width: 20px;
    height: 20px;
}

.collapse {
    border: 4px solid transparent;
    border-right-color: #333;
    border-left: none;
    margin-top: 6px;
}

.sidebar-body {
    display: flex;
    flex: 1;
    min-height: 0;
}

.sidebar-list {
    flex: 1;
    overflow: hidden;
    margin-right: 2px;
    padding-top: 6px;
}

.item {
    display: flex;
    align-items: center;
    height: 38px;
    padding-left: 3px;
    color: #444;
    font-size: 11px;
    text-decoration: none;
    white-space: nowrap;
}

.item svg {
    width: 32px;
    height: 32px;
    margin-right: 4px;
}

.item.selected {
    background-color: #deebf8;
}

.group {
    display: flex;
    align-items: center;
    justify-content: space-between;
    height: 32px;
    padding: 0 3px 10px 3px;
    color: #1a6cbc;
    font-size: 15px;
    line-height: 22px;
}

.group svg {
    width: 8px;
    height: 5px;
    margin-top: 6px;
}

/* Panels */
.panel {
    display: flex;
    flex-direction: column;
    border: 1px solid #c0c0c0;
    min-width: 0;
}

.panel-title {
    display: flex;
    align-items: center;
    height: 33px;
    padding: 0 12px 0 8px;
    color: #888;
    flex: none;
}

.panel-title h2 {
    flex: 1;
    font-size: 15px;
    color: #999;
}

.panel-title button {
    margin-left: 16px;
}

.pin {
    width: 8px;
    height: 9px;
}

.close {
    width: 9px;
    height: 9px;
}

.panel.active .panel-title {
    color: #333;
}

.panel.active .panel-title h2 {
    color: #1a6cbc;
}

/* Patient dashboard */
.dashboard {
    flex: 1 1 2px;
    margin: 4px 4px 2px 0;
}

.dashboard-body {
    display: flex;
    flex: 1;
    min-height: 0;
    padding-right: 1px;
}

.dashboard-content {
    flex: 1;
    min-width: 0;
    overflow: hidden;
    padding-top: 5px;
    margin-right: 1px;
}

.section {
    margin: 0 4px 10px 4px;
}

.section-head {
    display: flex;
    align-items: center;
    height: 38px;
    padding-left: 2px;
    border-top: 4px solid;
    border-bottom: 1px solid;
    margin-bottom: 2px;
}

.section-head a {
    color: #000;
    font-size: 17px;
    font-weight: 400;
}

.menu {
    width: 25px;
    height: 21px;
    margin-right: 6px;
}

.nurse .section-head {
    padding-left: 5px;
    border-color: #e77475;
}

.immunizations .section-head {
    border-color: #5aa7c5;
}

.orders .section-head {
    border-color: #a87fc4;
}

.ob .section-head {
    border-color: #f994c4;
    height: 36px;
}

.problems .section-head {
    border-color: #7572b5;
}

.nurse-box {
    display: flex;
    justify-content: flex-end;
    height: 101px;
    padding: 3px;
    border: 1px solid #ddd;
}

.radios {
    display: flex;
    gap: 17px;
    margin-left: auto;
    padding-right: 17px;
}

.problems .radios {
    gap: 10px;
    padding-right: 7px;
}

.radios label {
    display: flex;
    align-items: center;
    gap: 5px;
    color: #111;
    font-size: 14px;
}

.radios input {
    appearance: none;
    width: 25px;
    height: 25px;
    margin: 0;
    border-radius: 50%;
    background: radial-gradient(circle, #fff 6px, transparent 7px), linear-gradient(#c6c6c6, #f8f8f8);
}

.radios input:checked {
    background: radial-gradient(circle, #6a94ca 6px, transparent 7px), linear-gradient(#c6c6c6, #f8f8f8);
}

.grid-box {
    display: flex;
    overflow: hidden;
    border: 1px solid #c0c0c0;
}

.imm-box {
    height: 180px;
}

.orders-box {
    height: 200px;
}

.grid-box table {
    flex: 1;
    align-self: flex-start;
    width: 100%;
    min-width: 0;
    table-layout: fixed;
    border-collapse: separate;
    border-spacing: 0;
}

.col-check {
    width: 38px;
}

.col-date {
    width: 100px;
}

.grid-box th,
.grid-box td {
    height: 27px;
    padding: 1px 4px 0 4px;
    font-size: 15px;
    font-weight: 400;
    line-height: 20px;
    text-align: left;
    white-space: nowrap;
    overflow: hidden;
    text-overflow: ellipsis;
    border-right: 1px solid #c5cfda;
    border-bottom: 1px solid #dcdcdc;
}

.grid-box th {
    border-color: #c0c0c0;
}

.grid-box th .caret {
    float: right;
    margin: 8px 3px 0 0;
}

.grid-box td:last-child {
    border-right: none;
    padding-left: 2px;
}

.orders-box td {
    height: 28px;
    padding-top: 0;
}

.orders-box td:first-child {
    padding: 0 1px;
}

.orders-box td:last-child {
    padding-left: 4px;
}

.current td {
    background-color: #bfbfbf;
    border-right-color: #bfbfbf;
}

.orders-box input {
    display: block;
    appearance: none;
    width: 28px;
    height: 25px;
    margin: 0;
    border: 1px solid #222;
    background-color: #fff;
}

.orders-box .current input {
    background-color: #f1f1f1;
}

.grid-side {
    display: flex;
    flex-direction: column;
    width: 17px;
    flex: none;
}

.grid-corner {
    height: 27px;
    border-bottom: 1px solid #c0c0c0;
    flex: none;
}

.grid-side .scroll {
    flex: 1;
    margin: 1px;
}

/* OB summary */
.orders {
    margin-bottom: 6px;
}

.ob {
    height: 182px;
    margin: 0 0 10px 0;
    font-weight: 300;
    color: #222;
}

.ob-status {
    display: flex;
    align-items: baseline;
    gap: 20px;
    padding-left: 14px;
    font-size: 18px;
    line-height: 40px;
}

.ob-status .ob-main {
    font-size: 24px;
}

.ob small {
    font-size: 14px;
}

.ob-columns {
    display: flex;
    gap: 25px;
    padding: 1px 4px 0 4px;
}

.ob-col {
    width: 147px;
}

.ob-col:first-child {
    width: 125px;
}

.ob-col h4 {
    font-size: 20px;
    font-weight: 300;
    line-height: 28px;
    border-bottom: 1px solid #f994c4;
    margin-bottom: 2px;
}

.ob-col p {
    padding-left: 15px;
    font-size: 16px;
    font-weight: 300;
    line-height: 24px;
}

/* Right side */
.right {
    display: flex;
    flex-direction: column;
    flex: 1 1 2px;
    min-width: 0;
    margin: 4px 0 2px 0;
}

.clinical {
    flex: 1;
    min-height: 0;
    margin-bottom: 4px;
}

.clinical-bar {
    display: flex;
    align-items: center;
    height: 50px;
    margin: 0 2px;
    padding: 0 4px 0 15px;
    border-bottom: 1px solid #6a93c8;
    flex: none;
}

.templates {
    display: flex;
    align-items: center;
    gap: 6px;
    height: 28px;
    padding: 0 2px 0 6px;
    border: 1px solid #d4d4d4;
    font-size: 15px;
    color: #777;
}

.templates svg {
    width: 14px;
    height: 14px;
}

.date-label {
    margin-left: auto;
    font-size: 11px;
    font-weight: 600;
}

.date-box {
    display: flex;
    align-items: center;
    width: 120px;
    height: 30px;
    margin: 0 7px 0 6px;
    padding: 0 4px;
    border: 1px solid #c0c0c0;
}

.date-box select {
    appearance: none;
    flex: 1;
    border: none;
    padding: 0;
    background: none;
    font-family: inherit;
    font-size: 17px;
    color: #444;
}

.round-tools {
    display: flex;
    gap: 10px;
    align-self: flex-start;
}

.round-tools button {
    display: flex;
    flex-direction: column;
    align-items: center;
    font-size: 11px;
    line-height: 16px;
}

.round-tools svg {
    width: 30px;
    height: 30px;
    margin-bottom: 2px;
}

.eval-box {
    display: flex;
    flex: 1;
    min-height: 0;
    margin: 7px;
    border: 1px solid #c0c0c0;
}

.eval-list {
    flex: 1;
    overflow: hidden;
    padding-left: 7px;
}

.eval {
    height: 97px;
}

.eval-head {
    display: flex;
    align-items: center;
    height: 25px;
}

.eval-head svg {
    width: 20px;
    height: 20px;
    margin: 2px 2px 0 2px;
}

.expander {
    border: 3px solid transparent;
    border-right-color: #444;
    border-bottom-color: #444;
    margin: 2px 7px 0 0;
}

.eval-line {
    flex: 1;
    height: 25px;
    line-height: 24px;
    border-bottom: 1px solid #6a93c8;
}

.eval-line a {
    color: #444;
    font-size: 15px;
    font-weight: 600;
}

.eval.current .eval-line a {
    color: #000;
}

.eval-body {
    height: 70px;
    margin: 0 0 0 33px;
    border-bottom: 1px solid #6a93c8;
}

.eval-box .scroll {
    margin: 1px;
}

/* Assessment and plan */
.plan {
    height: 331px;
    flex: none;
}

.plan .panel-title {
    height: 32px;
}

.plan-head {
    display: flex;
    align-items: center;
    height: 31px;
    padding: 0 3px 0 2px;
    border-bottom: 1px solid #8fb0db;
    flex: none;
    font-size: 13px;
}

.plan-head label {
    padding-top: 4px;
}

.plan-head .note {
    margin-left: auto;
    font-size: 12px;
}

.note-btn {
    display: flex;
    align-items: center;
    justify-content: space-between;
    width: 40px;
    height: 24px;
    margin: 0 12px 0 5px;
    padding: 0 4px 0 3px;
    border: 1px solid #c0c0c0;
}

.note-btn.close-by {
    margin-right: 6px;
}

.note-btn svg {
    width: 16px;
    height: 12px;
}

.note-letter {
    font-family: "Liberation Serif", serif;
    font-size: 11px;
    font-style: italic;
    font-weight: bold;
    fill: #999;
}

.refresh svg {
    width: 21px;
    height: 21px;
}

.plan-box {
    display: flex;
    flex: 1;
    min-height: 0;
    margin: 9px 2px 0 2px;
    border: 1px solid #a8a8a8;
}

.plan-box:last-child {
    margin-bottom: 2px;
}

.plan-box textarea {
    flex: 1;
    padding: 1px 5px;
    border: none;
    outline: none;
    resize: none;
    overflow: hidden;
    font-family: "Liberation Sans", Arial, sans-serif;
    font-size: 12px;
    line-height: 14px;
    color: #000;
}

.plan-box .scroll {
    margin: 1px;
}

/* Smart box tab */
.smart-box {
    width: 33px;
    padding: 10px 0 0 7px;
    flex: none;
}

.smart-box a {
    color: #555;
    font-size: 13px;
    line-height: 20px;
    text-decoration: none;
    writing-mode: vertical-rl;
}
```
